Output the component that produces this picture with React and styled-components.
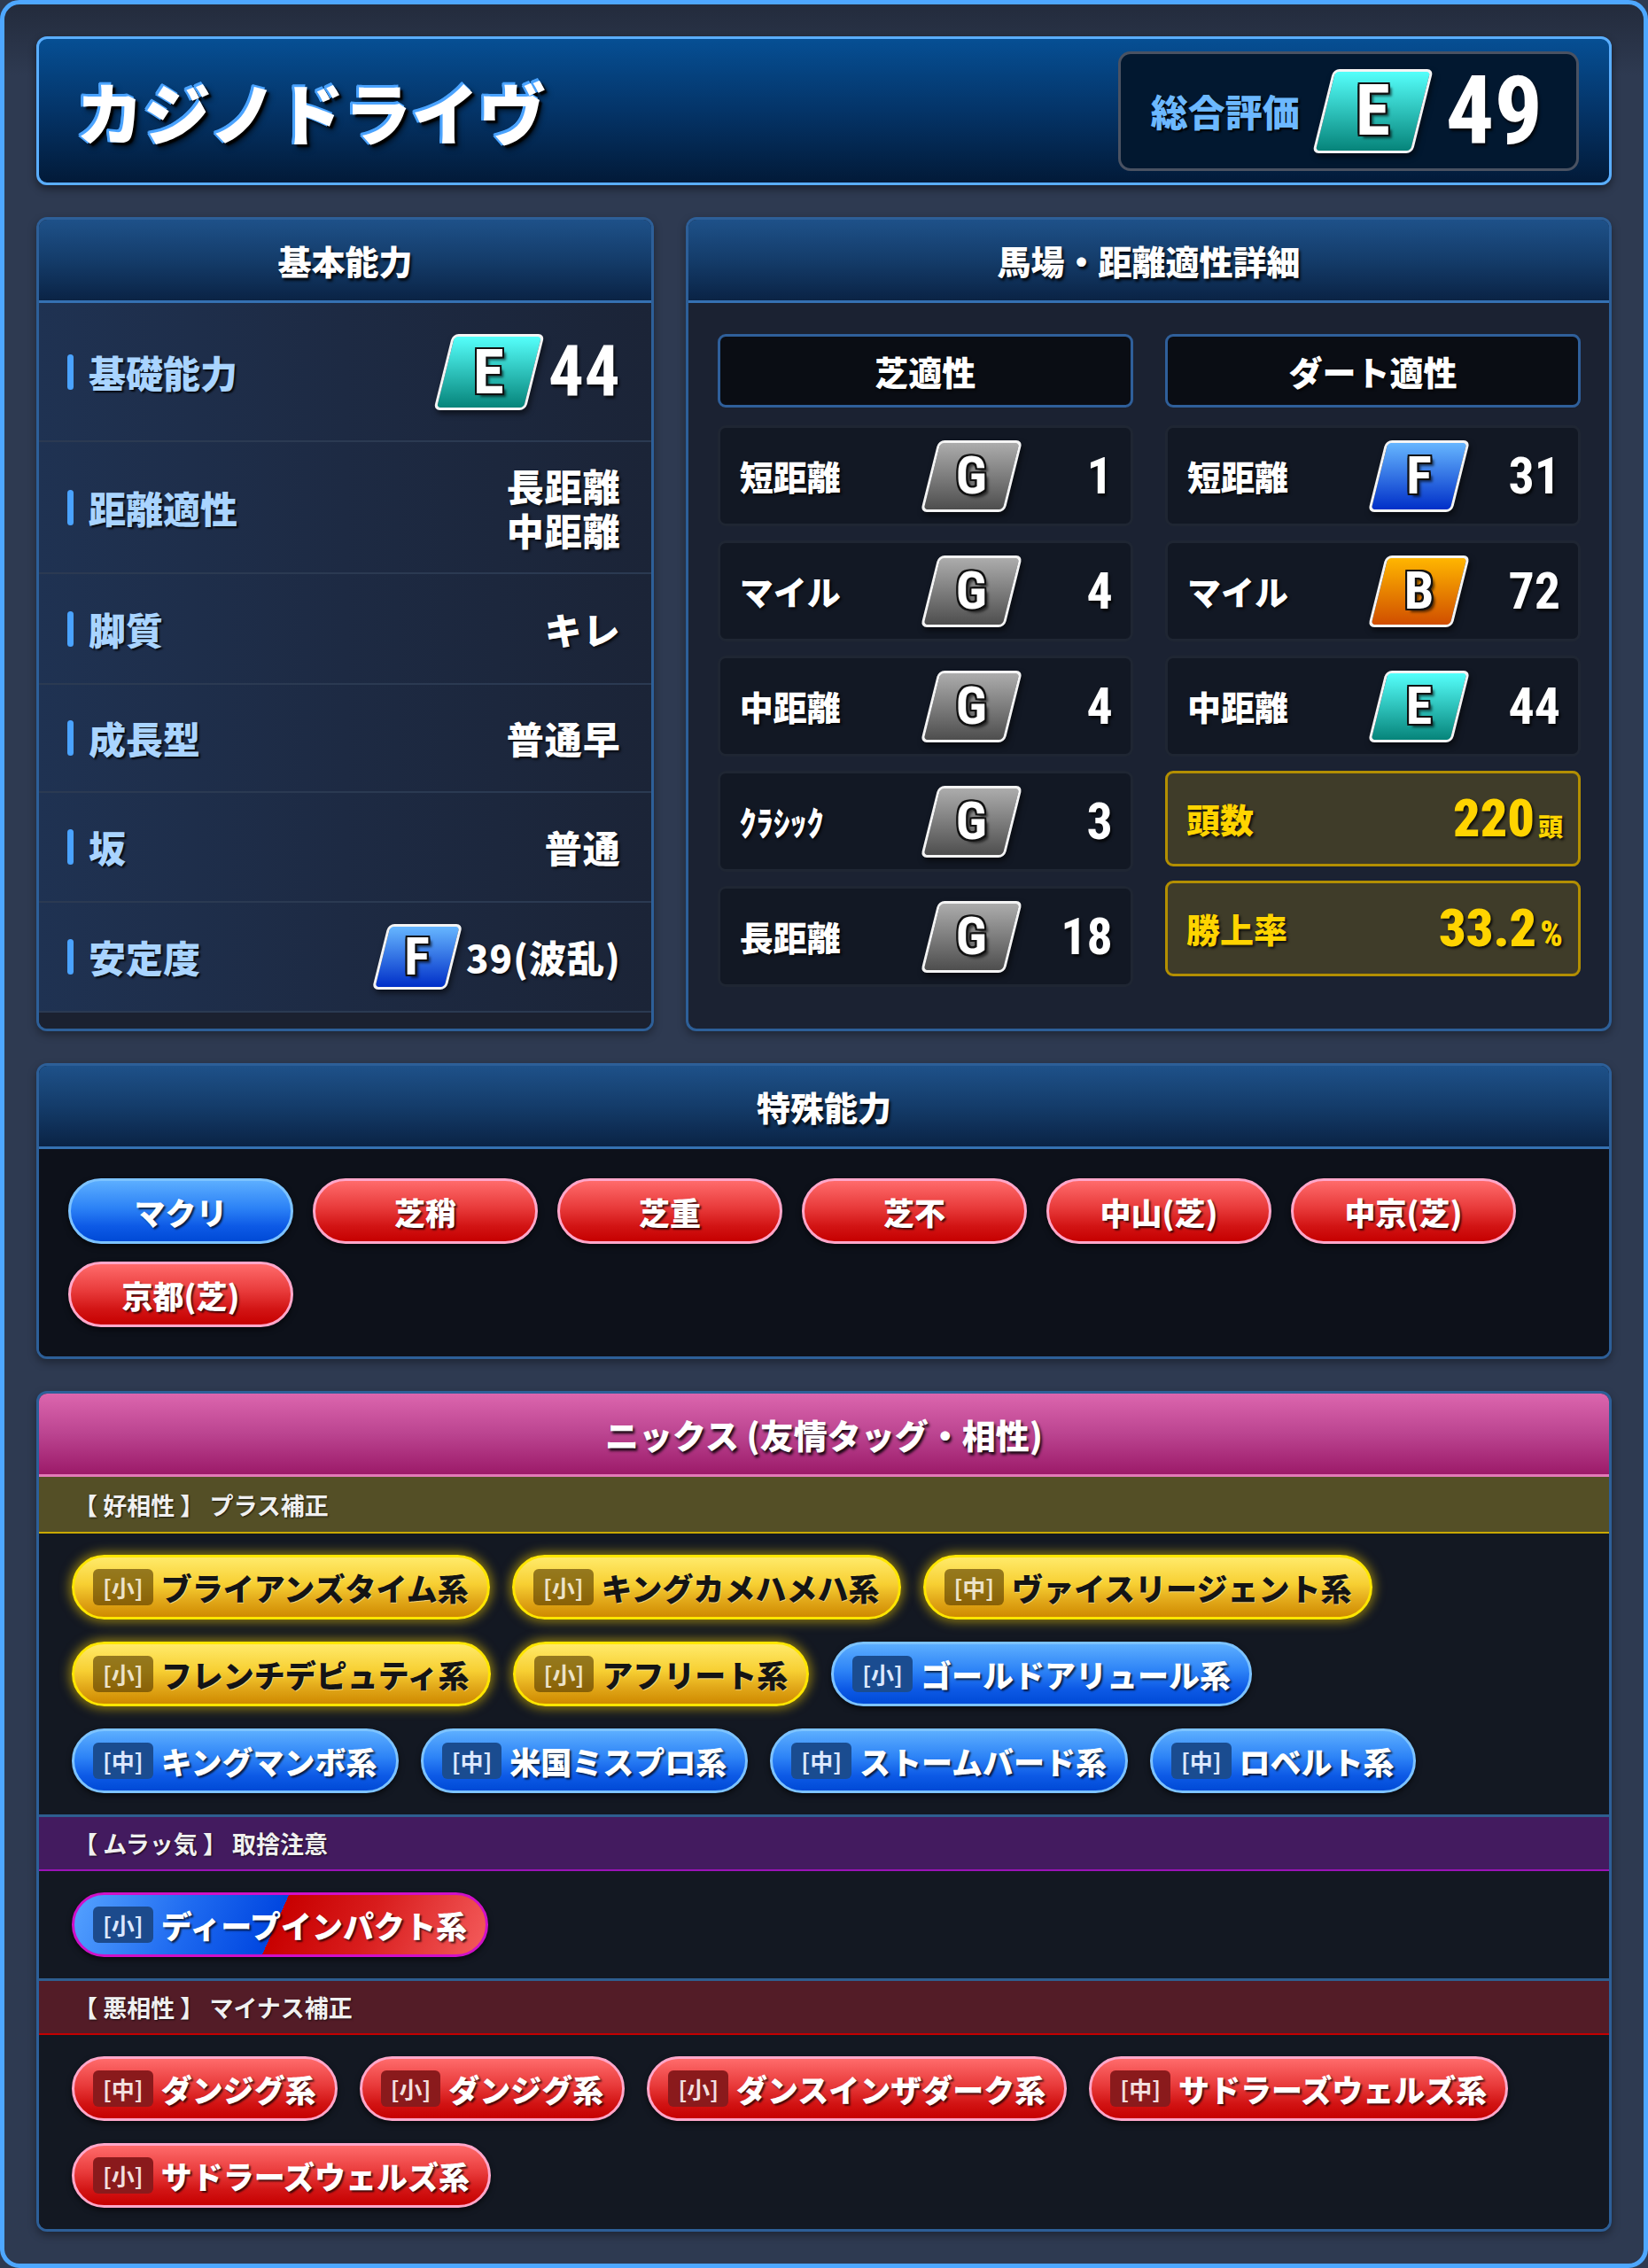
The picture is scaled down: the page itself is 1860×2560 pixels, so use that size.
import React from "react";
import styled, { createGlobalStyle, css } from "styled-components";

const JP = `"Noto Sans CJK JP", "Noto Sans", sans-serif`;
const NUM = `"Noto Sans ExtraCondensed", "Roboto Condensed", "Liberation Sans Narrow", "DejaVu Sans Condensed", "Noto Sans", sans-serif`;

const GlobalStyle = createGlobalStyle`
  html, body {
    margin: 0;
    padding: 0;
    background: #2e3a51;
  }
  body {
    font-family: ${JP};
  }
  * {
    box-sizing: border-box;
  }
`;

const gradeColors = {
  E: ["#55fffb", "#06847a"],
  F: ["#66b6ff", "#002fc8"],
  G: ["#acacac", "#4e4e4e"],
  B: ["#ffb600", "#d04e00"],
};

const Frame = styled.div`
  width: 1860px;
  min-height: 2560px;
  border: 5px solid #4ea7ff;
  border-radius: 22px;
  background: linear-gradient(180deg, #232b3c 0px, #2e3a51 80px, #2e3a51 100%);
  padding: 36px;
  display: flex;
  flex-direction: column;
  gap: 36px;
`;

/* ---------- header ---------- */

const NameCard = styled.div`
  height: 168px;
  border: 3px solid #5aaeff;
  border-radius: 12px;
  background: linear-gradient(180deg, #064f94 0%, #043468 50%, #021a38 100%);
  box-shadow: 0 4px 10px rgba(0, 0, 0, 0.45);
  display: flex;
  align-items: center;
  justify-content: space-between;
  padding: 0 34px 0 42px;
`;

const HorseName = styled.h1`
  margin: 0;
  font: 900 76px/1 ${JP};
  color: #fff;
  text-shadow: -3px -2px 0 #4aa3ff, -2px -3px 0 #4aa3ff, -3px 0 0 #4aa3ff,
    3px 3px 2px #000, 4px 5px 6px rgba(0, 0, 0, 0.6);
`;

const RatingBox = styled.div`
  display: flex;
  align-items: center;
  gap: 14px;
  height: 135px;
  padding: 0 38px 0 34px;
  background: #021830;
  border: 3px solid #4a5262;
  border-radius: 14px;
`;

const RatingLabel = styled.span`
  font: 900 42px/1 ${JP};
  color: #6cb8ff;
  text-shadow: 2px 2px 2px #000;
`;

/* ---------- grade badge ---------- */

const BadgeBox = styled.span`
  position: relative;
  flex: none;
  display: inline-flex;
  align-items: center;
  justify-content: center;
  width: ${(p) => p.$w}px;
  height: ${(p) => p.$h}px;
  margin: 0 ${(p) => Math.round(p.$h * 0.125)}px;

  &::before {
    content: "";
    position: absolute;
    inset: 0;
    transform: skewX(-14deg);
    border: 3px solid #f4f4f4;
    border-radius: 7px;
    background: linear-gradient(180deg, ${(p) => p.$c[0]} 0%, ${(p) => p.$c[1]} 100%);
    box-shadow: 3px 4px 6px rgba(0, 0, 0, 0.55);
  }
`;

const BadgeLetter = styled.span`
  position: relative;
  font: 700 ${(p) => p.$fs}px/1 ${NUM};
  font-stretch: extra-condensed;
  color: #fff;
  text-shadow: -2px -2px 0 #111, 2px -2px 0 #111, -2px 2px 0 #111, 2px 2px 0 #111,
    0 -2px 0 #111, 0 2px 0 #111, -2px 0 0 #111, 2px 0 0 #111, 4px 4px 3px rgba(0, 0, 0, 0.6);
`;

const Badge = ({ grade, w, h, fs }) => (
  <BadgeBox $w={w} $h={h} $c={gradeColors[grade]}>
    <BadgeLetter $fs={fs}>{grade}</BadgeLetter>
  </BadgeBox>
);

const BigNum = styled.span`
  font: 700 ${(p) => p.$fs}px/1 ${NUM};
  font-stretch: extra-condensed;
  color: ${(p) => p.$color || "#fff"};
  text-shadow: 2px 3px 3px rgba(0, 0, 0, 0.75);
`;

/* ---------- panels ---------- */

const TopGrid = styled.div`
  display: grid;
  grid-template-columns: 2fr 3fr;
  gap: 36px;
`;

const Panel = styled.section`
  display: flex;
  flex-direction: column;
  border: 3px solid #2d5f98;
  border-radius: 12px;
  overflow: hidden;
  background: ${(p) => p.$bg || "#1b2232"};
  box-shadow: 0 4px 10px rgba(0, 0, 0, 0.35);
`;

const PanelHead = styled.header`
  flex: none;
  height: 94px;
  display: flex;
  align-items: center;
  justify-content: center;
  font: 900 38px/1 ${JP};
  color: #fff;
  text-shadow: 2px 3px 3px rgba(0, 0, 0, 0.85);
  background: linear-gradient(180deg, #1e5189 0%, #143c6a 50%, #0a2345 100%);
  border-bottom: 3px solid #3571b2;

  ${(p) =>
    p.$pink &&
    css`
      background: linear-gradient(180deg, #dc66ae 0%, #bb4490 50%, #9c1a69 100%);
      border-bottom-color: #e27ab8;
    `}
`;

/* basic stats */

const StatList = styled.div`
  flex: 1;
  display: flex;
  flex-direction: column;
  background: #1b2130;
`;

const StatRow = styled.div`
  height: ${(p) => p.$h}px;
  display: flex;
  align-items: center;
  justify-content: space-between;
  padding: 0 34px 0 32px;
  background: linear-gradient(90deg, #1f3252 0%, #1d2a43 50%, #1b2437 100%);
  border-bottom: 2px solid #2b3a52;
`;

const StatLabel = styled.div`
  display: flex;
  align-items: center;
  gap: 17px;
  font: 900 42px/1 ${JP};
  color: #a9d4ff;
  text-shadow: 2px 2px 2px rgba(0, 0, 0, 0.8);

  &::before {
    content: "";
    width: 7px;
    height: 40px;
    border-radius: 4px;
    background: #4aa3ff;
  }
`;

const StatValue = styled.div`
  display: flex;
  align-items: center;
  gap: 4px;
  font: 900 42px/1 ${JP};
  color: #fff;
  letter-spacing: 1px;
  text-shadow: 2px 2px 3px rgba(0, 0, 0, 0.8);
`;

const StatLines = styled.div`
  display: flex;
  flex-direction: column;
  align-items: flex-end;
  gap: 8px;
  font: 900 42px/1 ${JP};
  color: #fff;
  letter-spacing: 1px;
  text-shadow: 2px 2px 3px rgba(0, 0, 0, 0.8);
`;

/* surface detail */

const SurfaceGrid = styled.div`
  flex: 1;
  display: grid;
  grid-template-columns: 1fr 1fr;
  column-gap: 36px;
  align-content: start;
  padding: 35px 32px 47px 33px;
`;

const SurfaceColumn = styled.div`
  display: flex;
  flex-direction: column;
  gap: 16px;
`;

const ColumnHead = styled.div`
  height: 83px;
  margin-bottom: 4px;
  display: flex;
  align-items: center;
  justify-content: center;
  background: #0a0d14;
  border: 3px solid #2f5f9a;
  border-radius: 9px;
  font: 900 38px/1 ${JP};
  color: #fff;
  text-shadow: 2px 2px 3px rgba(0, 0, 0, 0.8);
`;

const AptRow = styled.div`
  height: 114px;
  display: grid;
  grid-template-columns: 1fr auto 102px;
  align-items: center;
  padding: 0 20px 0 22px;
  background: #121824;
  border: 3px solid #1f2633;
  border-radius: 9px;
`;

const AptLabel = styled.span`
  font: 900 38px/1 ${JP};
  color: #fff;
  text-shadow: 2px 2px 3px rgba(0, 0, 0, 0.8);
`;

const AptNum = styled(BigNum)`
  justify-self: end;
`;

const GoldRow = styled.div`
  height: 108px;
  display: flex;
  align-items: center;
  justify-content: space-between;
  padding: 0 17px 0 21px;
  background: #3f3c29;
  border: 3px solid #b38f00;
  border-radius: 9px;
`;

const GoldLabel = styled.span`
  font: 900 38px/1 ${JP};
  color: #ffd400;
  text-shadow: 2px 2px 3px rgba(0, 0, 0, 0.8);
`;

const GoldValue = styled.span`
  display: flex;
  align-items: baseline;
  gap: 4px;
`;

const GoldUnit = styled.span`
  font: 900 ${(p) => p.$fs || 28}px/1 ${(p) => (p.$num ? NUM : JP)};
  font-stretch: extra-condensed;
  color: #ffd400;
  text-shadow: 2px 2px 3px rgba(0, 0, 0, 0.8);
`;

/* special abilities */

const pillLooks = {
  red: css`
    background: linear-gradient(180deg, #ff6b6b 0%, #e83a3a 45%, #d21414 75%, #c60000 100%);
    border-color: #ffa7ca;
  `,
  blue: css`
    background: linear-gradient(180deg, #5caeff 0%, #2c82f6 45%, #0d5ae6 75%, #004ad6 100%);
    border-color: #7dc3ff;
  `,
  gold: css`
    background: linear-gradient(180deg, #ffea6a 0%, #f7cf32 45%, #e2a91a 72%, #cf8a00 100%);
    border-color: #ffe600;
    box-shadow: 0 0 12px 3px rgba(255, 214, 0, 0.5);
  `,
  mixed: css`
    background: linear-gradient(114deg, #55a2ff 0%, #1e6af0 28%, #0046e0 49%, #c80000 49%, #d81c1c 70%, #f45c5c 100%);
    border-color: #d010c8;
  `,
};

const AbilityWrap = styled.div`
  display: flex;
  flex-wrap: wrap;
  gap: 20px 22px;
  padding: 33px;
  background: #0d111a;
`;

const AbilityPill = styled.div`
  width: 254px;
  height: 74px;
  display: flex;
  align-items: center;
  justify-content: center;
  border: 3px solid;
  border-radius: 37px;
  font: 900 35px/1 ${JP};
  color: #fff;
  text-shadow: 2px 2px 2px rgba(0, 0, 0, 0.7);
  box-shadow: 0 3px 6px rgba(0, 0, 0, 0.6);
  ${(p) => pillLooks[p.$look]}
`;

/* nicks */

const groupLooks = {
  good: { bg: "#544f26", line: "#c9a800" },
  fickle: { bg: "#431b5f", line: "#9b12b8" },
  bad: { bg: "#531c27", line: "#c40000" },
};

const GroupBar = styled.div`
  height: 64px;
  display: flex;
  align-items: center;
  padding-left: 39px;
  background: ${(p) => groupLooks[p.$kind].bg};
  border-bottom: 2px solid ${(p) => groupLooks[p.$kind].line};
  border-top: ${(p) => (p.$first ? "none" : "3px solid #2e5e90")};
  font: 700 27px/1 ${JP};
  color: #f0f0f0;
  text-shadow: 1px 1px 2px rgba(0, 0, 0, 0.7);
`;

const GroupBody = styled.div`
  display: flex;
  flex-wrap: wrap;
  gap: 25px;
  padding: 24px 37px;
  background: #131822;
`;

const NickPill = styled.div`
  height: 73px;
  display: inline-flex;
  align-items: center;
  gap: 9px;
  padding: 0 21px;
  border: 3px solid;
  border-radius: 37px;
  box-shadow: 0 3px 6px rgba(0, 0, 0, 0.6);
  ${(p) => pillLooks[p.$look]}
`;

const tagLooks = {
  gold: { bg: "rgba(86, 58, 0, 0.62)", color: "#ece2c8" },
  blue: { bg: "#1a4c90", color: "#dce8ff" },
  red: { bg: "#8a1a1c", color: "#f2dede" },
  mixed: { bg: "#1c4a8c", color: "#dce8ff" },
};

const NickTag = styled.span`
  height: 41px;
  display: flex;
  align-items: center;
  padding: 0 11px;
  border-radius: 6px;
  font: 700 26px/1 ${JP};
  background: ${(p) => tagLooks[p.$look].bg};
  color: ${(p) => tagLooks[p.$look].color};
`;

const NickName = styled.span`
  font: 900 35px/1 ${JP};
  color: ${(p) => (p.$look === "gold" ? "#141414" : "#fff")};
  text-shadow: ${(p) =>
    p.$look === "gold" ? "1px 1px 0 rgba(255,255,255,0.45)" : "2px 2px 2px rgba(0,0,0,0.7)"};
`;

/* ---------- data ---------- */

const turf = [
  ["短距離", "G", 1],
  ["マイル", "G", 4],
  ["中距離", "G", 4],
  ["ｸﾗｼｯｸ", "G", 3],
  ["長距離", "G", 18],
];

const dirt = [
  ["短距離", "F", 31],
  ["マイル", "B", 72],
  ["中距離", "E", 44],
];

const abilities = [
  ["マクリ", "blue"],
  ["芝稍", "red"],
  ["芝重", "red"],
  ["芝不", "red"],
  ["中山(芝)", "red"],
  ["中京(芝)", "red"],
  ["京都(芝)", "red"],
];

const nickGroups = [
  {
    kind: "good",
    title: "【 好相性 】 プラス補正",
    items: [
      ["小", "ブライアンズタイム系", "gold"],
      ["小", "キングカメハメハ系", "gold"],
      ["中", "ヴァイスリージェント系", "gold"],
      ["小", "フレンチデピュティ系", "gold"],
      ["小", "アフリート系", "gold"],
      ["小", "ゴールドアリュール系", "blue"],
      ["中", "キングマンボ系", "blue"],
      ["中", "米国ミスプロ系", "blue"],
      ["中", "ストームバード系", "blue"],
      ["中", "ロベルト系", "blue"],
    ],
  },
  {
    kind: "fickle",
    title: "【 ムラッ気 】 取捨注意",
    items: [["小", "ディープインパクト系", "mixed"]],
  },
  {
    kind: "bad",
    title: "【 悪相性 】 マイナス補正",
    items: [
      ["中", "ダンジグ系", "red"],
      ["小", "ダンジグ系", "red"],
      ["小", "ダンスインザダーク系", "red"],
      ["中", "サドラーズウェルズ系", "red"],
      ["小", "サドラーズウェルズ系", "red"],
    ],
  },
];

const AptItem = ({ label, grade, value }) => (
  <AptRow>
    <AptLabel>{label}</AptLabel>
    <Badge grade={grade} w={95} h={81} fs={60} />
    <AptNum $fs={58}>{value}</AptNum>
  </AptRow>
);

export default function App() {
  return (
    <>
      <GlobalStyle />
      <Frame>
        <NameCard>
          <HorseName>カジノドライヴ</HorseName>
          <RatingBox>
            <RatingLabel>総合評価</RatingLabel>
            <Badge grade="E" w={113} h={95} fs={79} />
            <BigNum $fs={108}>49</BigNum>
          </RatingBox>
        </NameCard>

        <TopGrid>
          <Panel>
            <PanelHead>基本能力</PanelHead>
            <StatList>
              <StatRow $h={157}>
                <StatLabel>基礎能力</StatLabel>
                <StatValue>
                  <Badge grade="E" w={104} h={86} fs={71} />
                  <BigNum $fs={79}>44</BigNum>
                </StatValue>
              </StatRow>
              <StatRow $h={149}>
                <StatLabel>距離適性</StatLabel>
                <StatLines>
                  <span>長距離</span>
                  <span>中距離</span>
                </StatLines>
              </StatRow>
              <StatRow $h={125}>
                <StatLabel>脚質</StatLabel>
                <StatValue>キレ</StatValue>
              </StatRow>
              <StatRow $h={122}>
                <StatLabel>成長型</StatLabel>
                <StatValue>普通早</StatValue>
              </StatRow>
              <StatRow $h={124}>
                <StatLabel>坂</StatLabel>
                <StatValue>普通</StatValue>
              </StatRow>
              <StatRow $h={124}>
                <StatLabel>安定度</StatLabel>
                <StatValue>
                  <Badge grade="F" w={84} h={74} fs={60} />
                  39(波乱)
                </StatValue>
              </StatRow>
            </StatList>
          </Panel>

          <Panel>
            <PanelHead>馬場・距離適性詳細</PanelHead>
            <SurfaceGrid>
              <SurfaceColumn>
                <ColumnHead>芝適性</ColumnHead>
                {turf.map(([label, grade, value], i) => (
                  <AptItem key={i} label={label} grade={grade} value={value} />
                ))}
              </SurfaceColumn>
              <SurfaceColumn>
                <ColumnHead>ダート適性</ColumnHead>
                {dirt.map(([label, grade, value], i) => (
                  <AptItem key={i} label={label} grade={grade} value={value} />
                ))}
                <GoldRow>
                  <GoldLabel>頭数</GoldLabel>
                  <GoldValue>
                    <GoldUnit $num $fs={60}>220</GoldUnit>
                    <GoldUnit>頭</GoldUnit>
                  </GoldValue>
                </GoldRow>
                <GoldRow>
                  <GoldLabel>勝上率</GoldLabel>
                  <GoldValue>
                    <GoldUnit $num $fs={60}>33.2</GoldUnit>
                    <GoldUnit $num $fs={40}>%</GoldUnit>
                  </GoldValue>
                </GoldRow>
              </SurfaceColumn>
            </SurfaceGrid>
          </Panel>
        </TopGrid>

        <Panel $bg="#0d111a">
          <PanelHead>特殊能力</PanelHead>
          <AbilityWrap>
            {abilities.map(([name, look]) => (
              <AbilityPill key={name} $look={look}>
                {name}
              </AbilityPill>
            ))}
          </AbilityWrap>
        </Panel>

        <Panel $bg="#131822">
          <PanelHead $pink>ニックス (友情タッグ・相性)</PanelHead>
          {nickGroups.map((group, gi) => (
            <React.Fragment key={group.kind}>
              <GroupBar $kind={group.kind} $first={gi === 0}>
                {group.title}
              </GroupBar>
              <GroupBody>
                {group.items.map(([size, name, look], i) => (
                  <NickPill key={i} $look={look}>
                    <NickTag $look={look}>[{size}]</NickTag>
                    <NickName $look={look}>{name}</NickName>
                  </NickPill>
                ))}
              </GroupBody>
            </React.Fragment>
          ))}
        </Panel>
      </Frame>
    </>
  );
}
